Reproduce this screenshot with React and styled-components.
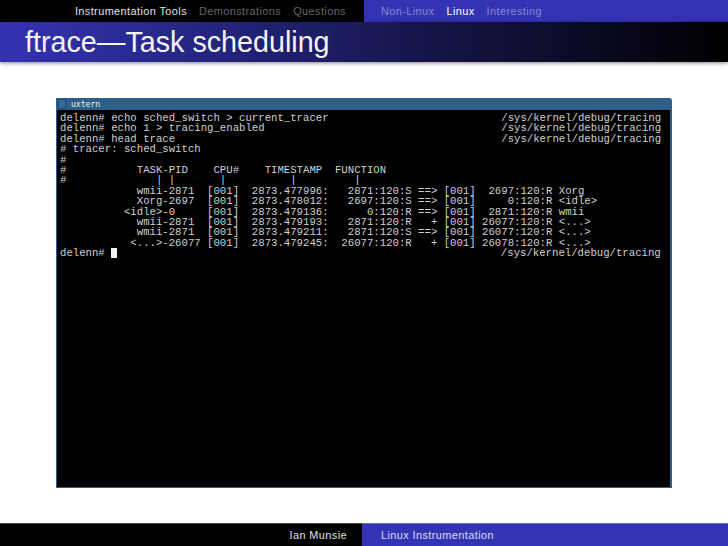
import React from "react";
import styled, { createGlobalStyle } from "styled-components";

const GlobalStyle = createGlobalStyle`
  html, body {
    margin: 0;
    padding: 0;
    background: #fff;
  }
`;

const lines = [
  "delenn# echo sched_switch > current_tracer                           /sys/kernel/debug/tracing",
  "delenn# echo 1 > tracing_enabled                                     /sys/kernel/debug/tracing",
  "delenn# head trace                                                   /sys/kernel/debug/tracing",
  "# tracer: sched_switch",
  "#",
  "#           TASK-PID    CPU#    TIMESTAMP  FUNCTION",
  "#              | |       |          |         |",
  "            wmii-2871  [001]  2873.477996:   2871:120:S ==> [001]  2697:120:R Xorg",
  "            Xorg-2697  [001]  2873.478012:   2697:120:S ==> [001]     0:120:R <idle>",
  "          <idle>-0     [001]  2873.479136:      0:120:R ==> [001]  2871:120:R wmii",
  "            wmii-2871  [001]  2873.479193:   2871:120:R   + [001] 26077:120:R <...>",
  "            wmii-2871  [001]  2873.479211:   2871:120:S ==> [001] 26077:120:R <...>",
  "           <...>-26077 [001]  2873.479245:  26077:120:R   + [001] 26078:120:R <...>",
];

const App = () => {
  return (
    <Slide>
      <GlobalStyle />
      <TopBar>
        <LeftNav>
          <NavItem $active>Instrumentation Tools</NavItem>
          <NavItem>Demonstrations</NavItem>
          <NavItem>Questions</NavItem>
        </LeftNav>
        <RightNav>
          <NavItem $blue>Non-Linux</NavItem>
          <NavItem $blue $active>
            Linux
          </NavItem>
          <NavItem $blue>Interesting</NavItem>
        </RightNav>
      </TopBar>
      <TitleBar>
        <Title>ftrace—Task scheduling</Title>
      </TitleBar>
      <Content>
        <Terminal>
          <WindowTitle>
            <WindowIcon />
            uxtern
          </WindowTitle>
          <Screen>
            {lines.join("\n")}
            {"\n"}
            delenn# <Cursor />
            {"                                                            /sys/kernel/debug/tracing"}
          </Screen>
        </Terminal>
      </Content>
      <Footer>
        <FooterLeft>Ian Munsie</FooterLeft>
        <FooterRight>Linux Instrumentation</FooterRight>
      </Footer>
    </Slide>
  );
};

export default App;

const Slide = styled.div`
  width: 728px;
  height: 546px;
  display: flex;
  flex-direction: column;
  overflow: hidden;
  background: #fff;
  font-family: "Liberation Sans", Arial, sans-serif;
`;

const TopBar = styled.div`
  display: flex;
  height: 22px;
  flex: none;
`;

const LeftNav = styled.div`
  width: 364px;
  background: #000;
  display: flex;
  align-items: center;
  justify-content: flex-end;
  gap: 12px;
  padding-right: 18px;
  box-sizing: border-box;
`;

const RightNav = styled.div`
  width: 364px;
  background: #3333b3;
  display: flex;
  align-items: center;
  gap: 12px;
  padding-left: 17px;
  box-sizing: border-box;
`;

const NavItem = styled.span`
  font-size: 10.9px;
  letter-spacing: 0.42px;
  color: ${(p) =>
    p.$blue
      ? p.$active
        ? "#ffffff"
        : "#8888cc"
      : p.$active
        ? "#e0e0e0"
        : "#666666"};
`;

const TitleBar = styled.div`
  height: 40px;
  flex: none;
  display: flex;
  align-items: center;
  padding-left: 25px;
  background: linear-gradient(to right, #3333b3 0%, #000 100%);
  box-shadow: 0 1px 4px rgba(0, 0, 0, 0.5);
  position: relative;
`;

const Title = styled.h1`
  margin: 0;
  font-size: 28.7px;
  font-weight: 400;
  color: #f4f4f8;
  white-space: nowrap;
`;

const Content = styled.div`
  flex: 1;
  padding: 36px 56px 0;
  min-height: 0;
`;

const Terminal = styled.div`
  width: 616px;
  height: 390px;
  box-sizing: border-box;
  background: #000;
  border: 1px solid #2f5f85;
  border-width: 0 2px 1px 1px;
  border-top-right-radius: 3px;
  display: flex;
  flex-direction: column;
`;

const WindowTitle = styled.div`
  height: 12px;
  flex: none;
  background: #2f5f87;
  display: flex;
  align-items: center;
  gap: 5px;
  padding-left: 1px;
  font-family: "DejaVu Sans Mono", monospace;
  font-size: 8.1px;
  color: #e6eef4;
`;

const WindowIcon = styled.span`
  display: block;
  width: 6px;
  height: 8px;
  border: 1px solid #1c4a6e;
  background: #336a96;
`;

const Screen = styled.pre`
  margin: 0;
  padding: 3px 0 0 3px;
  font-family: "Liberation Mono", "DejaVu Sans Mono", monospace;
  font-size: 10.66px;
  line-height: 10.4px;
  color: #cfcfcf;
`;

const Cursor = styled.span`
  display: inline-block;
  width: 6px;
  height: 10px;
  background: #f2f2f2;
  vertical-align: -2px;
`;

const Footer = styled.div`
  display: flex;
  height: 23px;
  flex: none;
  font-size: 10.9px;
  letter-spacing: 0.42px;
`;

const FooterLeft = styled.div`
  width: 362px;
  box-sizing: border-box;
  background: #000;
  color: #e0e0e0;
  border-top: 1px solid #444;
  text-align: right;
  padding-right: 15px;
  line-height: 22px;
`;

const FooterRight = styled.div`
  flex: 1;
  background: #3333b3;
  color: #ddddf5;
  border-top: 1px solid #6a6ac8;
  padding-left: 19px;
  line-height: 22px;
`;
